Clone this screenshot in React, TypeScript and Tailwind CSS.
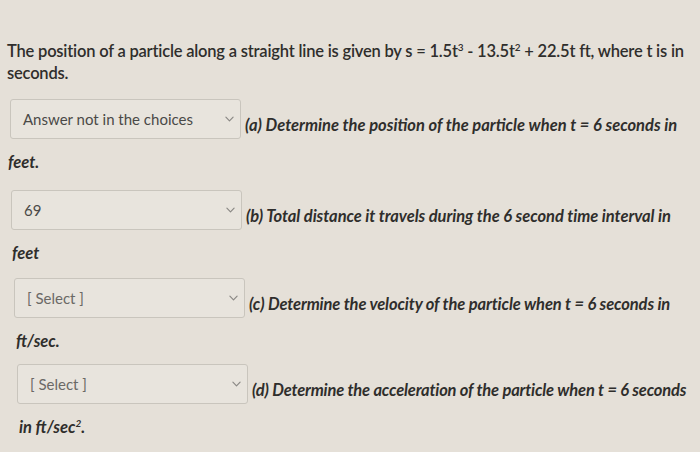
import React from 'react';

interface Part {
  value: string;
  placeholder?: boolean;
  label: string;
  labelTrack: string;
  unit: React.ReactNode;
  indent: string;
  unitIndent: string;
  rowH: string;
}

function Chevron() {
  return (
    <svg viewBox="0 0 10 6" className="w-[9px] h-[6px] text-[#8a8885]" fill="none">
      <path d="M1 1L5 5L9 1" stroke="currentColor" strokeWidth="1.3" strokeLinecap="round" strokeLinejoin="round" />
    </svg>
  );
}

function Sup({ children }: { children: React.ReactNode }) {
  return <span className="relative -top-[6px] text-[10px] leading-none">{children}</span>;
}

const parts: Part[] = [
  {
    value: 'Answer not in the choices',
    label: '(a) Determine the position of the particle when t = 6 seconds in',
    labelTrack: 'tracking-normal',
    unit: 'feet.',
    indent: 'ml-[10px]',
    unitIndent: 'ml-[8px]',
    rowH: 'h-[91px]',
  },
  {
    value: '69',
    label: '(b) Total distance it travels during the 6 second time interval in',
    labelTrack: 'tracking-[-0.05px]',
    unit: 'feet',
    indent: 'ml-[11px]',
    unitIndent: 'ml-[12px]',
    rowH: 'h-[88px]',
  },
  {
    value: '[ Select ]',
    placeholder: true,
    label: '(c) Determine the velocity of the particle when t = 6 seconds in',
    labelTrack: 'tracking-[-0.12px]',
    unit: 'ft/sec.',
    indent: 'ml-[14px]',
    unitIndent: 'ml-[16px]',
    rowH: 'h-[86px]',
  },
  {
    value: '[ Select ]',
    placeholder: true,
    label: '(d) Determine the acceleration of the particle when t = 6 seconds',
    labelTrack: 'tracking-[-0.17px]',
    unit: (
      <>
        in ft/sec<Sup>2</Sup>.
      </>
    ),
    indent: 'ml-[17px]',
    unitIndent: 'ml-[19px]',
    rowH: 'h-[88px]',
  },
];

export default function App() {
  return (
    <div
      className="w-[700px] h-[452px] overflow-hidden bg-[#e5e0d8] text-[#2f2e2c] flex flex-col"
      style={{ fontFamily: "Lato, 'Open Sans', sans-serif" }}
    >
      <p className="pl-[7px] pr-2 pt-[40px] text-[16.5px] leading-[22px] font-semibold tracking-[-0.2px]">
        The position of a particle along a straight line is given by s = 1.5t<Sup>3</Sup> - 13.5t<Sup>2</Sup> + 22.5t ft,
        where t is in seconds.
      </p>

      <div className="flex flex-col mt-[15px]">
        {parts.map((p, i) => (
          <div key={i} className={`flex flex-col shrink-0 ${p.rowH}`}>
            <div className={`flex items-center gap-[4px] ${p.indent}`}>
              <div className="w-[231px] h-[40px] shrink-0 rounded-[3px] border border-[#c9c5bd] bg-[#e8e4dd] flex items-center justify-between pl-[12px] pr-[6px]">
                <span className={`text-[15px] ${p.placeholder ? 'text-[#6b6966]' : 'text-[#4a4947]'}`}>{p.value}</span>
                <Chevron />
              </div>
              <span className={`text-[16.5px] font-bold italic whitespace-nowrap pt-[13px] ${p.labelTrack}`}>{p.label}</span>
            </div>
            <div className={`text-[16.5px] font-bold italic mt-[11px] ${p.unitIndent}`}>{p.unit}</div>
          </div>
        ))}
      </div>
    </div>
  );
}
